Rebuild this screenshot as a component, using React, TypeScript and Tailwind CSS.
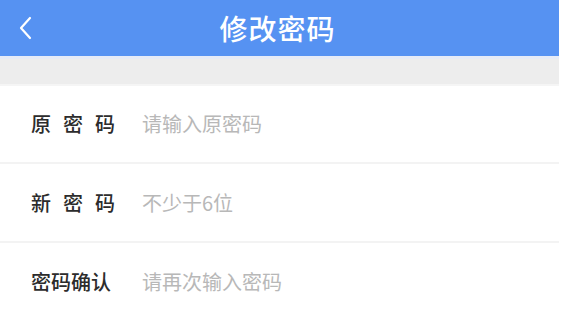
import React from 'react';

const font = { fontFamily: '"Noto Sans CJK SC", "Noto Sans", sans-serif' };

interface FieldRowProps {
    label: string;
    placeholder: string;
    spread?: boolean;
    last?: boolean;
}

const FieldRow: React.FC<FieldRowProps> = ({ label, placeholder, spread, last }) => (
    <div className={`h-[82px] flex items-center pl-[31px] ${last ? '' : 'border-b-2 border-[#f3f3f3]'}`}>
        <div className={`w-[84px] shrink-0 flex text-[20px] font-medium text-[#2c2c2c] leading-none ${spread ? 'justify-between' : ''}`}>
            {label.split('').map((ch, i) => (
                <span key={i}>{ch}</span>
            ))}
        </div>
        <input
            type="password"
            placeholder={placeholder}
            className="ml-[27px] flex-1 bg-transparent outline-none text-[20px] placeholder:text-[#b8b8b8] text-[#333]"
            style={font}
        />
    </div>
);

export default function App() {
    return (
        <div className="w-[577px] h-[321px] bg-white overflow-hidden flex" style={font}>
            <div className="w-[559px] flex flex-col">
                <div className="h-[56px] shrink-0 bg-[#5692f2] flex items-center relative">
                    <button className="absolute left-[14px] top-[14px] w-[22px] h-[28px] flex items-center justify-center">
                        <svg width="14" height="24" viewBox="0 0 14 24" fill="none">
                            <path d="M12 2 L3 12 L12 22" stroke="#fff" strokeWidth="2.2" strokeLinecap="round" strokeLinejoin="round" />
                        </svg>
                    </button>
                    <h1 className="flex-1 text-center text-white text-[28px] font-medium tracking-[1px] pr-[4px]">修改密码</h1>
                </div>
                <div className="h-[3px] shrink-0 bg-[#e6ebf7]"></div>
                <div className="h-[25px] shrink-0 bg-[#ededed]"></div>
                <div className="h-[2px] shrink-0 bg-[#f5f5f5]"></div>
                <FieldRow label="原密码" placeholder="请输入原密码" spread />
                <FieldRow label="新密码" placeholder="不少于6位" spread />
                <FieldRow label="密码确认" placeholder="请再次输入密码" last />
            </div>
        </div>
    );
}
